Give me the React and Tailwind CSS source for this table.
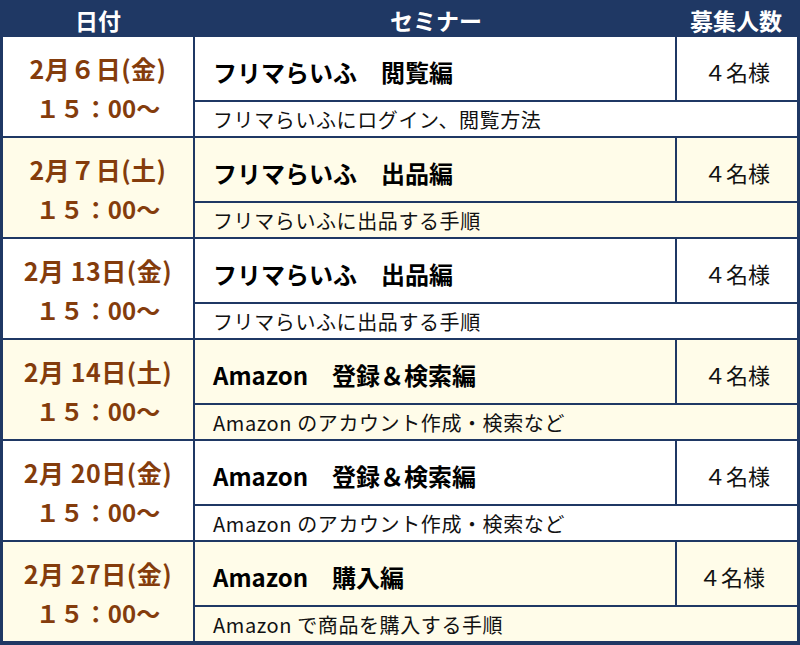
const rows = [
  { date: '2月６日(金)', title: 'フリマらいふ　閲覧編', desc: 'フリマらいふにログイン、閲覧方法', cream: false },
  { date: '2月７日(土)', title: 'フリマらいふ　出品編', desc: 'フリマらいふに出品する手順', cream: true },
  { date: '2月 13日(金)', title: 'フリマらいふ　出品編', desc: 'フリマらいふに出品する手順', cream: false },
  { date: '2月 14日(土)', title: 'Amazon　登録＆検索編', desc: 'Amazon のアカウント作成・検索など', cream: true },
  { date: '2月 20日(金)', title: 'Amazon　登録＆検索編', desc: 'Amazon のアカウント作成・検索など', cream: false },
  { date: '2月 27日(金)', title: 'Amazon　購入編', desc: 'Amazon で商品を購入する手順', cream: true, shift: true },
]

function Row({ row }) {
  const bg = row.cream ? 'bg-[#fffce9]' : 'bg-white'
  return (
    <div className="grid h-[99px] grid-cols-[190px_480px_1fr] grid-rows-[63px_34px] gap-[2px]">
      <div className={`${bg} row-span-2 flex flex-col items-center justify-center gap-[10px] pt-[2px] font-bold text-[#843c0c]`}>
        <div className="text-[25px] leading-[30px] tracking-[0.5px]">{row.date}</div>
        <div className="text-[24px] leading-[30px]">１５：00～</div>
      </div>
      <div className={`${bg} flex items-center pl-[18px] pt-[6px] text-[24px] font-bold text-black`}>
        {row.title}
      </div>
      <div className={`${bg} flex items-center justify-center pt-[6px] text-[22px] text-[#111] ${row.shift ? 'pr-[10px]' : ''}`}>
        ４名様
      </div>
      <div className={`${bg} col-span-2 flex items-center pl-[18px] pt-[2px] text-[20px] tracking-[0.6px] text-[#111]`}>
        {row.desc}
      </div>
    </div>
  )
}

export default function App() {
  return (
    <div
      className="h-[645px] w-[800px] bg-white"
      style={{ fontFamily: '"Noto Sans CJK JP", "Noto Sans", sans-serif' }}
    >
      <div className="flex h-[645px] w-[800px] flex-col gap-[2px] border-x-[3px] border-b-[4px] border-t-[3px] border-[#1f3864] bg-[#1f3864]">
        <div className="-mb-[2px] grid h-[34px] shrink-0 grid-cols-[190px_482px_1fr] items-center text-[23px] font-bold text-white">
          <div className="text-center">日付</div>
          <div className="text-center pl-[4px]">セミナー</div>
          <div className="text-center">募集人数</div>
        </div>
        {rows.map((row, i) => (
          <Row key={i} row={row} />
        ))}
      </div>
    </div>
  )
}
